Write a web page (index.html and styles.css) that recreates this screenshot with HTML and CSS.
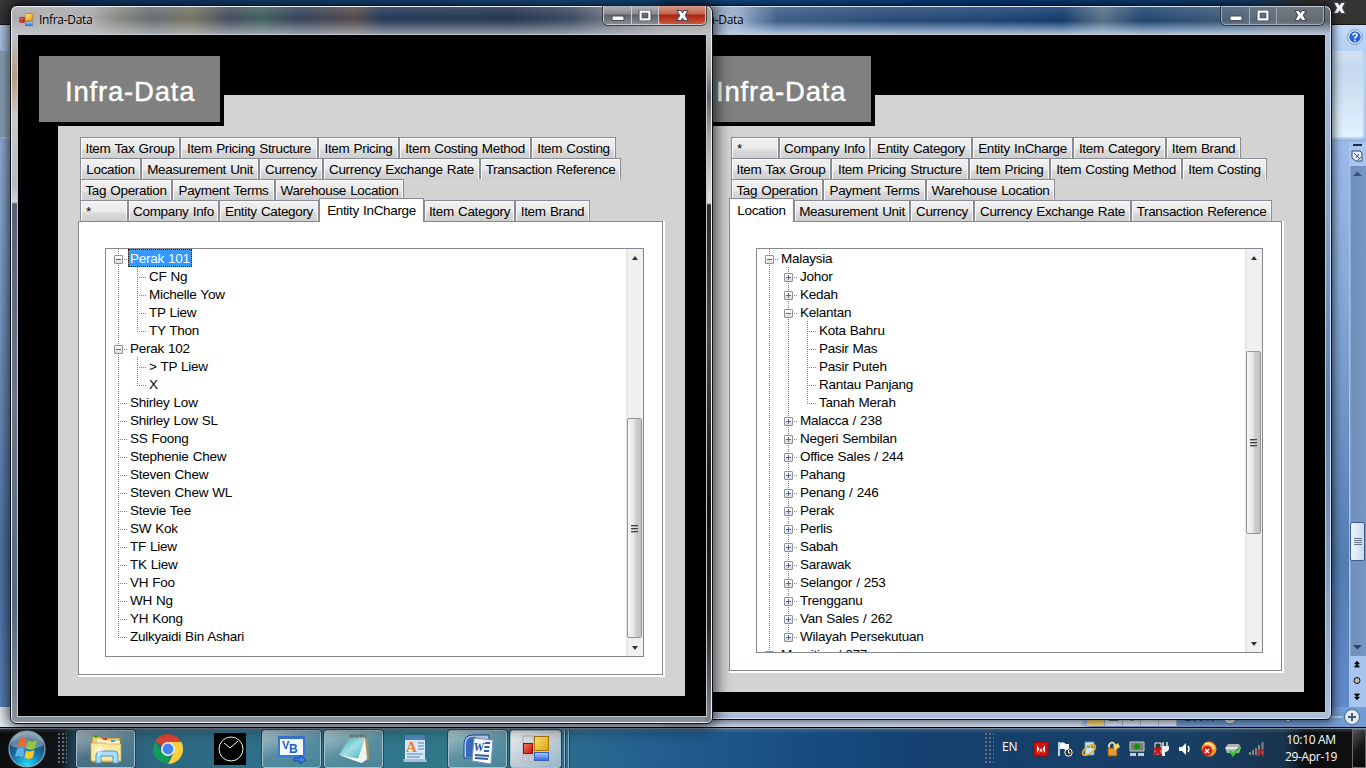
FILE: index.html
```
<!DOCTYPE html>
<html lang="en">
<head>
<meta charset="utf-8">
<title>Infra-Data</title>
<link rel="stylesheet" href="styles.css">
</head>
<body>
<svg class="defs" width="0" height="0">
  <defs>
    <linearGradient id="gRed" x1="0" y1="0" x2="1" y2="1"><stop offset="0" stop-color="#f07858"/><stop offset="1" stop-color="#c01008"/></linearGradient>
    <linearGradient id="gYel" x1="0" y1="0" x2="1" y2="1"><stop offset="0" stop-color="#ffe680"/><stop offset="1" stop-color="#e0a000"/></linearGradient>
    <linearGradient id="gBlu" x1="0" y1="0" x2="0" y2="1"><stop offset="0" stop-color="#a8ccff"/><stop offset="1" stop-color="#3068e0"/></linearGradient>
    <radialGradient id="gOrb" cx=".5" cy=".95" r=".9"><stop offset="0" stop-color="#20e0ff"/><stop offset=".45" stop-color="#1878b0"/><stop offset=".8" stop-color="#1c4a72"/><stop offset="1" stop-color="#7fa8c0"/></radialGradient>
    <linearGradient id="gPad" x1="0" y1="0" x2="1" y2="1"><stop offset="0" stop-color="#3aa0aa"/><stop offset=".5" stop-color="#9fe0e4"/><stop offset="1" stop-color="#48b0b8"/></linearGradient>
    <symbol id="form" viewBox="0 0 28 28">
      <path d="M1 1h11v8M1 1v26h26M6 20v7M1 20h11" fill="none" stroke="#b9b6b6"/>
      <rect x="12.500" y="1.500" width="14" height="14" fill="url(#gYel)" stroke="#a87800"/>
      <rect x="1.500" y="8.500" width="9" height="10" fill="url(#gRed)" stroke="#a00800"/>
      <rect x="12.500" y="17.500" width="14" height="8" fill="url(#gBlu)" stroke="#3860b0"/>
    </symbol>
    <symbol id="close" viewBox="0 0 12 10"><path d="M2.500 1.500h2L6 3.200 7.500 1.500h2L7.700 5l2 3.500H7.500L6 6.800 4.500 8.500H2.300L4.300 5z" fill="#fff" stroke="#474a58" stroke-width="1.600" paint-order="stroke"/></symbol>
    <symbol id="max" viewBox="0 0 12 10"><rect x="2" y="1.500" width="8" height="7" fill="none" stroke="#474a58" stroke-width="3.600"/><rect x="2" y="1.500" width="8" height="7" fill="none" stroke="#fff" stroke-width="2"/></symbol>
    <symbol id="min" viewBox="0 0 12 10"><rect x=".5" y="5.500" width="11" height="4" rx="1" fill="#fff" stroke="#474a58"/></symbol>
  </defs>
</svg>

<main class="desktop">
  <section class="word">
    <div class="word-top"><svg class="word-x" width="17" height="14" viewBox="0 0 12 10"><use href="#close"/></svg></div>
    <div class="word-ribbon">
      <div class="ribbon-edge left"></div>
      <div class="ribbon-right">
        <svg width="16" height="16" viewBox="0 0 16 16"><circle cx="8" cy="8" r="6.500" fill="#2464dc" stroke="#e4eefa" stroke-width="1.500"/><circle cx="8" cy="8" r="7.400" fill="none" stroke="#5878a8" stroke-width=".7"/><path d="M6 6.500q0-2 2-2t2 1.700q0 1.200-2 2.300v1.200M8 10.800v1.500" fill="none" stroke="#fff" stroke-width="1.600"/></svg>
        <div class="ribbon-edge"></div>
      </div>
    </div>
    <div class="word-body">
      <div class="word-scroll">
        <svg width="16" height="24" viewBox="0 0 16 24"><path d="M4 2h9v2H4z" fill="#1c2c50"/><path d="M3 9h8l2 2v8H7l-4-3z" fill="#e6eefa" stroke="#34466c"/><path d="M5 11l5 5m0-4l-3 4M9 18l3-3" stroke="#34466c"/></svg>
        <div class="word-track">
          <svg width="16" height="17"><path d="M4 10l4.500-4.500L13 10z" fill="#3c4f7c"/></svg>
          <div class="word-thumb"><i></i><i></i><i></i><i></i></div>
          <svg width="16" height="17"><path d="M4 6h9l-4.500 4.500z" fill="#343c70"/></svg>
        </div>
        <svg width="16" height="51" viewBox="0 0 16 51"><path d="M8 5l2.500 3h-5zM8 8l2.500 3h-5zM5.500 11h5M8 44l2.500-3h-5zM8 41l2.500-3h-5zM5.500 38h5" fill="#000" stroke="#000" stroke-width=".5"/><circle cx="8" cy="24.500" r="3" fill="#b9b9b9" stroke="#111"/></svg>
      </div>
    </div>
    <div class="word-status">
      <div class="views"><b class="on">▭</b><b>▤</b><b>◉</b><b>≡</b><b>≡</b></div>
      <span class="pct">100%</span>
      <svg width="120" height="20" viewBox="0 0 120 20"><path d="M20 10h100" stroke="#dce9fb" stroke-width="1"/><circle cx="7" cy="10" r="7" fill="#e4ecf6" stroke="#486690"/><path d="M61 9h8v3l-4 4-4-4z" fill="#d8e4f4" stroke="#486690"/></svg>
      <svg width="18" height="18" viewBox="0 0 18 18"><circle cx="9" cy="9" r="7.500" fill="#e0eaf6" stroke="#4c6488"/><path d="M9 5v8M5 9h8" stroke="#4a5a74" stroke-width="2"/></svg>
    </div>
  </section>

  <section class="window back">
    <header class="title">
      <svg width="14" height="14"><use href="#form"/></svg><span class="caption">Infra-Data</span>
      <div class="buttons"><span><svg width="14" height="11"><use href="#min"/></svg></span><span><svg width="14" height="11"><use href="#max"/></svg></span><span class="x"><svg width="17" height="13"><use href="#close"/></svg></span></div>
    </header>
    <div class="client">
      <h1 class="heading">Infra-Data</h1>
      <div class="panel">
        <div class="tabs">
          <div class="tab-row"><span style="width:48px" class="star">*</span><span style="width:91px">Company Info</span><span style="width:102px">Entity Category</span><span style="width:101px">Entity InCharge</span><span style="width:93px">Item Category</span><span style="width:75px">Item Brand</span></div>
          <div class="tab-row"><span style="width:100px">Item Tax Group</span><span style="width:138px">Item Pricing Structure</span><span style="width:81px">Item Pricing</span><span style="width:132px">Item Costing Method</span><span style="width:85px">Item Costing</span></div>
          <div class="tab-row"><span style="width:92px">Tag Operation</span><span style="width:103px">Payment Terms</span><span style="width:129px">Warehouse Location</span></div>
          <div class="tab-row"><span style="width:65px" class="active first">Location</span><span style="width:116px">Measurement Unit</span><span style="width:64px">Currency</span><span style="width:157px">Currency Exchange Rate</span><span style="width:141px">Transaction Reference</span></div>
        </div>
        <div class="page"><div class="page-in"><div class="tree">
          <ul class="nodes">
            <li><i class="g v"><b class="minus"></b></i><span>Malaysia</span></li>
            <li><i class="g v0"></i><i class="g v"><b class="plus"></b></i><span>Johor</span></li>
            <li><i class="g v0"></i><i class="g v"><b class="plus"></b></i><span>Kedah</span></li>
            <li><i class="g v0"></i><i class="g v"><b class="minus"></b></i><span>Kelantan</span></li>
            <li><i class="g v0"></i><i class="g v0"></i><i class="g v"></i><span>Kota Bahru</span></li>
            <li><i class="g v0"></i><i class="g v0"></i><i class="g v"></i><span>Pasir Mas</span></li>
            <li><i class="g v0"></i><i class="g v0"></i><i class="g v"></i><span>Pasir Puteh</span></li>
            <li><i class="g v0"></i><i class="g v0"></i><i class="g v"></i><span>Rantau Panjang</span></li>
            <li><i class="g v0"></i><i class="g v0"></i><i class="g v last"></i><span>Tanah Merah</span></li>
            <li><i class="g v0"></i><i class="g v"><b class="plus"></b></i><span>Malacca / 238</span></li>
            <li><i class="g v0"></i><i class="g v"><b class="plus"></b></i><span>Negeri Sembilan</span></li>
            <li><i class="g v0"></i><i class="g v"><b class="plus"></b></i><span>Office Sales / 244</span></li>
            <li><i class="g v0"></i><i class="g v"><b class="plus"></b></i><span>Pahang</span></li>
            <li><i class="g v0"></i><i class="g v"><b class="plus"></b></i><span>Penang / 246</span></li>
            <li><i class="g v0"></i><i class="g v"><b class="plus"></b></i><span>Perak</span></li>
            <li><i class="g v0"></i><i class="g v"><b class="plus"></b></i><span>Perlis</span></li>
            <li><i class="g v0"></i><i class="g v"><b class="plus"></b></i><span>Sabah</span></li>
            <li><i class="g v0"></i><i class="g v"><b class="plus"></b></i><span>Sarawak</span></li>
            <li><i class="g v0"></i><i class="g v"><b class="plus"></b></i><span>Selangor / 253</span></li>
            <li><i class="g v0"></i><i class="g v"><b class="plus"></b></i><span>Trengganu</span></li>
            <li><i class="g v0"></i><i class="g v"><b class="plus"></b></i><span>Van Sales / 262</span></li>
            <li><i class="g v0"></i><i class="g v last"><b class="plus"></b></i><span>Wilayah Persekutuan</span></li>
            <li><i class="g v"><b class="plus"></b></i><span>Mauritius / 277</span></li>
          </ul>
          <div class="scroll"><i class="up"></i><div class="rail"><div class="thumb back-thumb"><i></i><i></i><i></i></div></div><i class="down"></i></div>
        </div></div></div>
      </div>
    </div>
  </section>

  <section class="window front">
    <header class="title">
      <svg width="14" height="14"><use href="#form"/></svg><span class="caption">Infra-Data</span>
      <div class="buttons"><span><svg width="14" height="11"><use href="#min"/></svg></span><span><svg width="14" height="11"><use href="#max"/></svg></span><span class="x"><svg width="17" height="13"><use href="#close"/></svg></span></div>
    </header>
    <div class="client">
      <h1 class="heading">Infra-Data</h1>
      <div class="panel">
        <div class="tabs">
          <div class="tab-row"><span style="width:100px">Item Tax Group</span><span style="width:138px">Item Pricing Structure</span><span style="width:81px">Item Pricing</span><span style="width:132px">Item Costing Method</span><span style="width:85px">Item Costing</span></div>
          <div class="tab-row"><span style="width:61px">Location</span><span style="width:118px">Measurement Unit</span><span style="width:64px">Currency</span><span style="width:157px">Currency Exchange Rate</span><span style="width:141px">Transaction Reference</span></div>
          <div class="tab-row"><span style="width:92px">Tag Operation</span><span style="width:103px">Payment Terms</span><span style="width:129px">Warehouse Location</span></div>
          <div class="tab-row"><span style="width:48px" class="star">*</span><span style="width:91px">Company Info</span><span style="width:100px">Entity Category</span><span style="width:105px" class="active">Entity InCharge</span><span style="width:91px">Item Category</span><span style="width:75px">Item Brand</span></div>
        </div>
        <div class="page"><div class="page-in"><div class="tree">
          <ul class="nodes">
            <li><i class="g v"><b class="minus"></b></i><span class="sel">Perak 101</span></li>
            <li><i class="g v0"></i><i class="g v"></i><span>CF Ng</span></li>
            <li><i class="g v0"></i><i class="g v"></i><span>Michelle Yow</span></li>
            <li><i class="g v0"></i><i class="g v"></i><span>TP Liew</span></li>
            <li><i class="g v0"></i><i class="g v last"></i><span>TY Thon</span></li>
            <li><i class="g v"><b class="minus"></b></i><span>Perak 102</span></li>
            <li><i class="g v0"></i><i class="g v"></i><span>&gt; TP Liew</span></li>
            <li><i class="g v0"></i><i class="g v last"></i><span>X</span></li>
            <li><i class="g v"></i><span>Shirley Low</span></li>
            <li><i class="g v"></i><span>Shirley Low SL</span></li>
            <li><i class="g v"></i><span>SS Foong</span></li>
            <li><i class="g v"></i><span>Stephenie Chew</span></li>
            <li><i class="g v"></i><span>Steven Chew</span></li>
            <li><i class="g v"></i><span>Steven Chew WL</span></li>
            <li><i class="g v"></i><span>Stevie Tee</span></li>
            <li><i class="g v"></i><span>SW Kok</span></li>
            <li><i class="g v"></i><span>TF Liew</span></li>
            <li><i class="g v"></i><span>TK Liew</span></li>
            <li><i class="g v"></i><span>VH Foo</span></li>
            <li><i class="g v"></i><span>WH Ng</span></li>
            <li><i class="g v"></i><span>YH Kong</span></li>
            <li><i class="g v last"></i><span>Zulkyaidi Bin Ashari</span></li>
          </ul>
          <div class="scroll"><i class="up"></i><div class="rail"><div class="thumb front-thumb"><i></i><i></i><i></i></div></div><i class="down"></i></div>
        </div></div></div>
      </div>
    </div>
  </section>

  <footer class="taskbar">
    <svg class="orb" width="40" height="40" viewBox="0 0 40 40">
      <circle cx="20" cy="20" r="18" fill="url(#gOrb)" stroke="#8aa4b4" stroke-width="1.200"/>
      <path d="M4 17a16 15 0 0 1 32 0q-16 6-32 0z" fill="#fff" opacity=".32"/>
      <path d="M12.500 10q3.500-2 7 .5l-1.500 8q-3.500-2-7.500-.5z" fill="#ee6a30"/><path d="M21 11.500q4 2.500 9-.5l-2 8.500q-4 2.500-8.500 0z" fill="#96c83c"/><path d="M10 20q4-2 7.500.5l-1.500 8q-4-2.500-8-.5z" fill="#60b0ec"/><path d="M19 21.500q4 2 8.500-.5L26 28q-4 3.500-8.500.5z" fill="#fcc828"/>
    </svg>
    <i class="grip g1"></i>
    <span class="task open explorer"><svg width="34" height="32" viewBox="0 0 34 32"><path d="M3 3h8l1 2h19v24H3z" fill="#efd47a" stroke="#ad852b"/><path d="M8 6h9l1 2h13v3H8z" fill="#fff6d0"/><path d="M5 2.500h4v2H5z" fill="#20b020"/><path d="M14 5h4v2h-4z" fill="#e03820"/><path d="M22 7h4v2h-4z" fill="#38a0e0"/><path d="M2 10h14l2 1h14v17H2z" fill="#fae9a0" stroke="#c9a44a" stroke-width=".7"/><path d="M7 30v-8q0-4 4-4h14q4 0 4 4v8h-5v-7H12v7z" fill="#a4dff5" stroke="#4d9bc8"/><path d="M10 11v12M5 17h10M7 14l6 6M13 14l-6 6" stroke="#fff" stroke-width="1" opacity=".85"/></svg></span>
    <span class="task chrome"><svg width="30" height="30" viewBox="0 0 30 30"><path d="M15 15L2 7.500A15 15 0 0 1 28 7.500z" fill="#db4437"/><path d="M15 8h13.400A15 15 0 0 1 15 30l6-11.500z" fill="#ffcd40"/><path d="M2 7.500l7 11 6 3 3-1L14.500 30A15 15 0 0 1 2 7.500z" fill="#0f9d58"/><circle cx="15" cy="15" r="7" fill="#f1f1f1"/><circle cx="15" cy="15" r="5.400" fill="#4285f4"/></svg></span>
    <span class="task clockapp"><svg width="32" height="32" viewBox="0 0 32 32"><path d="M0 0h32v32H0z"/><circle cx="17" cy="16" r="12" fill="none" stroke="#f4f4f4"/><path d="M10 10l6 5 8-7" fill="none" stroke="#fff"/></svg></span>
    <span class="task open vb"><svg width="31" height="30" viewBox="0 0 31 30"><rect x="3" y="3" width="25" height="19" fill="#f4f9ff" stroke="#3978d4" stroke-width="2"/><path d="M2 2h27v3H2z" fill="#3c78d4"/><text x="6" y="15" font-size="11" class="vbt">V</text><text x="13" y="19" font-size="12" class="vbt">B</text><path d="M18 24h6v-3l6 5-6 4v-3h-6z" fill="#4080e0" stroke="#1848a0"/></svg></span>
    <span class="task open pad"><svg width="32" height="32" viewBox="0 0 32 32"><path d="M15 4h15l1 23-9 1z" fill="#a98f58"/><path d="M27 4l2 22-5 4-5-3z" fill="#eff5f3"/><path d="M12 4h15L20 26 1 22z" fill="url(#gPad)"/><path d="M1 22l19 3.500 4 4.500-5-1.500z" fill="#f8fcfa"/><path d="M12 3h16" stroke="#716c5c" stroke-width="3" stroke-dasharray="1.500 1"/></svg></span>
    <span class="task wordpad"><svg width="26" height="30" viewBox="0 0 26 30"><path d="M3 1h20v26H3z" fill="#d5e8f8"/><path d="M3 1h20v5H3z" fill="#5587bd"/><path d="M1 25h23l1 3H2z" fill="#9ebede"/><text x="4" y="18" font-size="15" class="wpt">A</text><path d="M16 9h6M16 12h6M16 15h6M5 20h16M5 23h13" stroke="#5482b8"/></svg></span>
    <span class="task open wordapp"><svg width="32" height="32" viewBox="0 0 32 32"><path d="M2 25V11Q2 2 11 2h16v23z" fill="#b8cdf0" stroke="#1b459e"/><path d="M4 24V11q0-7 7-7h3L10 24z" fill="#3869bc"/><path d="M12 5l19 2-2 24-19-3z" fill="#fafcff" stroke="#7290bd"/><text x="11.500" y="17.500" font-size="12" class="wdt">W</text><path d="M23 10h5M22.500 14h5M22 18h5M13 22l14 1M13 25l13 1" stroke="#2f5ba8" stroke-width="1.800"/></svg></span>
    <span class="task current"><svg width="28" height="28"><use href="#form"/></svg></span><i class="stack"></i><i class="stack"></i>
    <i class="grip g2"></i>
    <span class="lang">EN</span>
    <div class="tray">
      <svg viewBox="0 0 16 16"><path d="M1 1h14v14H1z" fill="#d4140c" stroke="#8c0c08"/><path d="M4 12V4l2.500 4zM12 12V4L9.500 8zM6 12l2-5 2 5-2-2z" fill="#fff"/></svg>
      <svg viewBox="0 0 16 16"><path d="M2 1v14" stroke="#fff" stroke-width="1.500"/><path d="M3 2q3-2 6 1h3v6q-3 1-5-1H3z" fill="#fff"/><circle cx="11.500" cy="11.500" r="3.700" fill="#333" stroke="#fff"/><path d="M11.500 9v3h2" fill="none" stroke="#fff"/></svg>
      <svg viewBox="0 0 16 16"><path d="M4 1h9v13H4z" fill="#c7e6fa" stroke="#5296c4"/><path d="M6 4h3v3H6z" fill="#df5945"/><path d="M10 4h2v3h-2z" fill="#5ba845"/><ellipse cx="8" cy="9" rx="7.500" ry="3.500" transform="rotate(-35 8 9)" fill="none" stroke="#f3a82c" stroke-width="1.700"/></svg>
      <svg viewBox="0 0 16 16"><path d="M4 7V4q3-5 6 0v3" fill="none" stroke="#dfd3b4" stroke-width="2"/><path d="M3 7h9v8H3z" fill="#e39a38" stroke="#874e10"/><path d="M8 5l5-3 2 4-5 3z" fill="#f8d458"/></svg>
      <svg viewBox="0 0 16 16"><path d="M1 1h14v9H1z" fill="#788078" stroke="#c8c8c8"/><path d="M8 2.500v6M5 5.500h6" stroke="#049804" stroke-width="3"/><path d="M1 12h6v3H1zM9 12h6v3H9z" fill="#c9c9c9"/></svg>
      <svg viewBox="0 0 16 16"><path d="M10 1v4M14 1v4" stroke="#eee" stroke-width="1.400"/><path d="M9 5h7v3q-1 3-4 3v4H9z" fill="#eee"/><path d="M2 2h6v11H2z" fill="#333" stroke="#eee"/><path d="M1 7l7 7M8 7l-7 7" stroke="#e21212" stroke-width="2.500"/></svg>
      <svg viewBox="0 0 16 16"><path d="M2 6h3l4-4v12L5 10H2z" fill="#fff"/><path d="M11 5q2 3 0 6" fill="none" stroke="#fff" stroke-width="1.500"/></svg>
      <svg viewBox="0 0 16 16"><circle cx="8" cy="8" r="7.500" fill="#f59524"/><path d="M4 3q7-2 9 5" fill="none" stroke="#ffe5a0" stroke-width="2"/><circle cx="6" cy="10" r="5" fill="#d41a14"/><path d="M4 8l4 4M8 8l-4 4" stroke="#fff" stroke-width="1.500"/></svg>
      <svg viewBox="0 0 16 16"><path d="M3 3h11l2 4-2 5H2L0 7z" fill="#aeb3b4"/><path d="M1 7h14" stroke="#e7e9e9" stroke-width="2"/><path d="M5 10l3 4 7-8" fill="none" stroke="#34bf36" stroke-width="2.600"/></svg>
      <svg viewBox="0 0 16 16"><path d="M1 14v-3M4 14V9M7 14V7M10 14V4M13.500 14V1" stroke="#7f858b" stroke-width="2"/><path d="M8 8l7 7M15 8l-7 7" stroke="#dc1515" stroke-width="2"/></svg>
    </div>
    <div class="time"><span>10:10 AM</span><span>29-Apr-19</span></div>
    <i class="peek"></i>
  </footer>
</main>
</body>
</html>
```
FILE: styles.css
```
* { box-sizing: border-box; }
body { margin: 0; font-family: "Liberation Sans", Arial, sans-serif; background: #000; }
.defs { position: absolute; }
.desktop { position: relative; width: 1366px; height: 768px; overflow: hidden; }
svg { flex: none; display: block; }
i, b { font-style: normal; }

/* Word processor behind the forms */
.word { height: 728px; display: flex; flex-direction: column; }
.word-top { height: 25px; display: flex; justify-content: flex-end; padding: 1px 18px 0 0; border-bottom: 1px solid #161616; background: linear-gradient(90deg, #3a3a3c 0, #33363b 30px, #164078 90px, #1d5796 560px, #083c7c 1000px, #153f6d 1250px, #353433 1310px); }
.word-ribbon { height: 117px; display: flex; justify-content: space-between; background: linear-gradient(#c3dafa, #b8d2f5 20px, #a5c3e9 100px, #98b6e0); }
.ribbon-edge { width: 34px; height: 90px; border: 2px solid #b7d5f5; border-left: 0; border-radius: 0 4px 4px 0; background: linear-gradient(#d4e1f2, #c4d8ef 18px, #e1f2fd); }
.ribbon-edge.left { width: 11px; margin-top: 24px; border-left: 2px solid #8daac5; border-radius: 4px 0 0 4px; background: #a0b8cd; }
.ribbon-right { width: 35px; display: flex; flex-direction: column; align-items: flex-end; gap: 4px; padding: 4px 1px 0 0; }
.ribbon-right > svg { margin-right: 2px; }
.word-body { flex: 1; display: flex; justify-content: flex-end; background: linear-gradient(#9cbbe9, #86a8d8 150px, #547db2 420px, #5f8bca); }
.word-scroll { width: 17px; display: flex; flex-direction: column; background: #a8c5f0; }
.word-track { flex: 1; display: flex; flex-direction: column; background: linear-gradient(90deg, #a7c3e7 0 1px, #708fba 2px, #7595c3 100%); }
.word-thumb { height: 39px; width: 15px; margin: 339px 0 auto 1px; border: 1px solid #405a91; border-radius: 2px; display: flex; flex-direction: column; gap: 1px; align-items: center; justify-content: center; background: linear-gradient(90deg, #f0f5fb, #c7d9f0); }
.word-thumb i { width: 8px; height: 1px; background: #66758c; }
.word-status { height: 20px; margin-bottom: 1px; display: flex; align-items: center; justify-content: flex-end; padding-right: 5px; background: linear-gradient(90deg, #eef4fc, #dae7f8 50px, #d2e1f6 1080px, #6d99d3 1092px, #729cd2); }
.views { display: flex; height: 18px; background: #dbe6f3; }
.views b { width: 18px; font-size: 12px; text-align: center; color: #456; border-right: 1px solid #9eb5d5; }
.views .on { background: #ffda72; }
.pct { width: 46px; text-align: center; font-size: 12px; color: #263c70; }

/* Glass windows */
.window { position: absolute; top: 5px; display: flex; flex-direction: column; border: 1px solid #0d1116; border-radius: 7px 7px 6px 6px; padding: 0 5px 6px 6px; }
.front { left: 10px; width: 703px; height: 719px; z-index: 2; box-shadow: inset 0 0 0 1px #eef1f3, 0 0 16px 2px rgba(0,0,0,.8); background:
  linear-gradient(transparent 0, transparent 28px, #a2a2a2 60px, #606267 90px, #a6a6a8 130px, #d7d8dc 190px, #d7d8dc 197px, #2b2b2c 199px, #4c4a4a 330px, #111 500px, #292929 620px, #7c838e 710px) right / 7px 100% no-repeat,
  linear-gradient(transparent 0, transparent 28px, #b59c80 70px, #cbc7c6 110px, #b6bac3 180px, #cfd4dc 196px, #566273 198px, #6a7789 400px, #516982 600px, #8a919d) left / 7px 100% no-repeat,
  linear-gradient(#858a94, #8a929c) bottom / 100% 7px no-repeat,
  linear-gradient(rgba(255,255,255,.15), rgba(255,255,255,0) 12px, rgba(255,255,255,.1) 17px, rgba(205,210,215,.62) 28px),
  linear-gradient(90deg, #aeadb1 0, #a8a9ab 80px, #85877f 110px, #666d75 140px, #777563 180px, #454e5f 220px, #42605d 250px, #36435b 290px, #564b4b 345px, #263a57 370px, #25364f 500px, #3d4b62 560px, #656c79 590px, #969698 650px, #a3a3a4); }
.back { left: 661px; width: 671px; height: 715px; z-index: 1; box-shadow: inset 0 0 0 1px #dbe6f2, 0 0 8px 2px rgba(0,0,0,.6); background:
  linear-gradient(transparent 0, transparent 28px, #a6bddb 50px, #7fa0c9 220px, #5e7eaf 400px, #7b9bc9 560px, #a9bfdd) right / 7px 100% no-repeat,
  linear-gradient(#adc1df, #a5bbda) bottom / 100% 7px no-repeat,
  linear-gradient(rgba(180,200,225,.2), transparent 15px, rgba(170,195,225,.3) 19px, rgba(190,210,238,.85) 28px),
  linear-gradient(90deg, #a5b6cf 0, #9bafca 75px, #3e5e86 115px, #2a4b75 220px, #1d426f 350px, #123a6a 400px, #5b7085 440px, #1f446f 480px, #3c5876 560px, #64676a 620px, #606062); }
.title { height: 28px; flex: none; display: flex; align-items: flex-start; padding: 7px 0 0 2px; gap: 6px; }
.caption { font: 12px/14px "Open Sans", "Noto Sans", sans-serif; letter-spacing: -.32px; color: #000; text-shadow: 0 0 6px rgba(255,255,255,.8); }
.buttons { margin: -7px 0 0 auto; height: 19px; display: flex; border: 1px solid #c8cbd0; border-top: 0; border-radius: 0 0 5px 5px; box-shadow: 0 0 0 1px rgba(30,34,44,.75); }
.front .buttons { margin-right: 1px; }
.back .buttons { margin-right: 2px; }
.buttons span { width: 28px; display: flex; justify-content: center; padding-top: 4px; border-right: 1px solid #c8cbd0; background: linear-gradient(#b5b5b8, #84878c 8px, #5c6067 9px, #8a8d92); }
.buttons span + span { width: 27px; }
.buttons span.x { width: 46px; padding-top: 3px; border: 0; border-radius: 0 0 4px 4px; background: linear-gradient(#d99886, #c4634f 8px, #a82513 9px, #d0543a); }
.back .buttons { border-color: #9dabba; }
.back .buttons span, .back .buttons span.x { border-color: #9dabba; background: rgba(110,125,145,.28); }
.client { position: relative; flex: 1; min-height: 0; display: flex; border: 1px solid #c4c7ca; padding: 60px 21px 20px 40px; background: #000; }
.heading { position: absolute; left: 21px; top: 21px; width: 185px; height: 70px; margin: 0; padding-left: 26px; border: solid #000; border-width: 0 4px 4px 0; background: #808080; color: #fff; font-size: 27.5px; font-weight: 400; line-height: 72px; letter-spacing: .8px; -webkit-text-stroke: .4px #fff; white-space: nowrap; }
.panel { flex: 1; min-width: 0; display: flex; flex-direction: column; padding: 42px 20px 19px; background: #d3d3d3; }

/* Tab strip */
.tabs { padding-left: 2px; height: 84px; flex: none; }
.tab-row { display: flex; height: 21px; align-items: flex-end; }
.tab-row span { flex: none; height: 21px; line-height: 21px; text-align: center; white-space: nowrap; font-size: 13.5px; letter-spacing: -.34px; word-spacing: .8px; color: #000; border: 1px solid #898c95; border-bottom: 0; box-shadow: inset 1px 1px #fbfbfb, inset -1px 0 #f5f5f5; background: linear-gradient(#f1f1f1, #e9e9e9 11px, #dadada 12px, #cecece); }
.tab-row .star { text-align: left; padding-left: 5px; }
.tab-row .active { position: relative; height: 24px; margin-bottom: -1px; background: #fff; line-height: 23px; }
.tab-row .first { margin-left: -2px; }
.page { flex: 1; min-height: 0; display: flex; background: #fff; padding: 0 2px 2px 0; }
.page-in { flex: 1; min-width: 0; display: flex; border: 1px solid #828790; padding: 26px 18px 17px 26px; }

/* Tree */
.tree { flex: 1; min-width: 0; display: flex; overflow: hidden; border: 1px solid #828790; }
.nodes { flex: 1; min-width: 0; list-style: none; margin: 0; padding: 0 0 0 3px; }
.nodes li { display: flex; height: 18px; font-size: 13.5px; letter-spacing: -.24px; word-spacing: .5px; line-height: 20px; white-space: nowrap; color: #000; }
.nodes span { height: 18px; padding: 0 2px; }
.nodes .sel { background: #3399ff; color: #fff; outline: 1px dotted #301800; outline-offset: -1px; }
.g { width: 19px; height: 18px; padding: 6px 0 0 5px; background: repeating-linear-gradient(#808080 0 1px, #fff 1px 2px) 9px 0 / 1px 18px no-repeat; }
.g.v { background: repeating-linear-gradient(#808080 0 1px, #fff 1px 2px) 9px 0 / 1px 18px no-repeat, repeating-linear-gradient(90deg, #808080 0 1px, #fff 1px 2px) 9px 10px / 9px 1px no-repeat; }
.g.last { background-size: 1px 11px, 9px 1px; }
.g b { display: block; width: 9px; height: 9px; border: 1px solid #919191; border-radius: 1px; background: linear-gradient(#4b63a7, #4b63a7) center / 5px 1px no-repeat, linear-gradient(#fff, #dcdcdc); }
.g .plus { background: linear-gradient(#4b63a7, #4b63a7) center / 5px 1px no-repeat, linear-gradient(#4b63a7, #4b63a7) center / 1px 5px no-repeat, linear-gradient(#fff, #dcdcdc); }
.scroll { width: 17px; flex: none; display: flex; flex-direction: column; background: linear-gradient(90deg, #e3e3e3, #f0f0f0 3px); }
.up, .down { width: 17px; height: 17px; flex: none; padding: 7px 0 0 6px; }
.up::before, .down::before { content: ""; display: block; width: 0; border: solid transparent; border-width: 0 3.5px 4px; border-bottom-color: #333; }
.down::before { border-width: 4px 3.5px 0; border-top-color: #333; }
.rail { flex: 1; min-height: 0; }
.thumb { width: 15px; margin-left: 1px; border: 1px solid #979797; border-radius: 2px; display: flex; flex-direction: column; align-items: center; justify-content: center; gap: 2px; background: linear-gradient(90deg, #f5f5f5, #e8e8e9 6px, #d2d2d5 7px, #c0c0c4); }
.thumb i { width: 7px; height: 2px; border-top: 1px solid #444; background: #aaa; margin-bottom: -1px; }
.front-thumb { height: 220px; margin-top: 152px; }
.back-thumb { height: 183px; margin-top: 85px; }

/* Taskbar */
.taskbar { position: relative; height: 40px; display: flex; align-items: center; border-top: 1px solid #7e8f9c; background: linear-gradient(rgba(255,255,255,.16), transparent 4px), linear-gradient(90deg, #0c0d0f 0, #121519 60px, #234e66 78px, #2d6680 150px, #2e7289 300px, #317889 460px, #2d6e8d 550px, #245f90 650px, #174d83 800px, #14406f 930px, #193e63 1200px, #17334d 1285px, #0b0e12 1305px, #101010); }
.orb { margin-left: 7px; }
.grip { width: 9px; height: 32px; background: radial-gradient(circle at 1px 1px, #647078 .8px, transparent 1.1px) 0 0 / 4px 4px; }
.g1 { margin: 0 9px 0 11px; }
.task { flex: none; height: 38px; width: 59px; display: flex; align-items: center; justify-content: center; }
.open, .current { border: 1px solid #a6bfca; border-radius: 3px; box-shadow: 0 0 0 1px rgba(10,35,50,.5); background: linear-gradient(160deg, rgba(255,255,255,.6), rgba(255,255,255,.2) 50%, rgba(255,255,255,.12)); }
.explorer { width: 59px; }
.chrome { width: 65px; }
.clockapp { width: 60px; }
.vb { margin-left: 2px; }
.pad { margin-left: 3px; }
.wordpad { width: 65px; padding-right: 2px; }
.current { width: 51px; margin-left: 3px; background: linear-gradient(150deg, #eef0f2, #c3cfd8 50%, #93b6c8); }
.stack { width: 4px; height: 38px; border-right: 1px solid #8fb3c4; box-shadow: 1px 0 #174560; }
.vbt { font-family: "Liberation Sans", sans-serif; font-weight: 700; fill: #1762c6; }
.wpt { font-family: "Liberation Serif", serif; font-weight: 700; fill: #ef7f20; }
.wdt { font-family: "Liberation Serif", serif; font-weight: 700; font-style: italic; fill: #1c489c; }
.g2 { margin-left: auto; }
.lang { width: 37px; padding-left: 8px; margin-bottom: 4px; font: 12px "Open Sans", sans-serif; letter-spacing: -.2px; color: #fff; }
.tray { display: flex; gap: 8px; margin: 0 11px 0 2px; }
.tray svg { width: 16px; height: 16px; }
.time { width: 70px; display: flex; flex-direction: column; align-items: center; gap: 1px; font: 12px/16px "Open Sans", sans-serif; letter-spacing: -.35px; color: #fff; }
.peek { width: 14px; height: 39px; margin-left: 6px; border: 1px solid #68696b; background: linear-gradient(135deg, #555, #161616 50%, #080808); }
```
